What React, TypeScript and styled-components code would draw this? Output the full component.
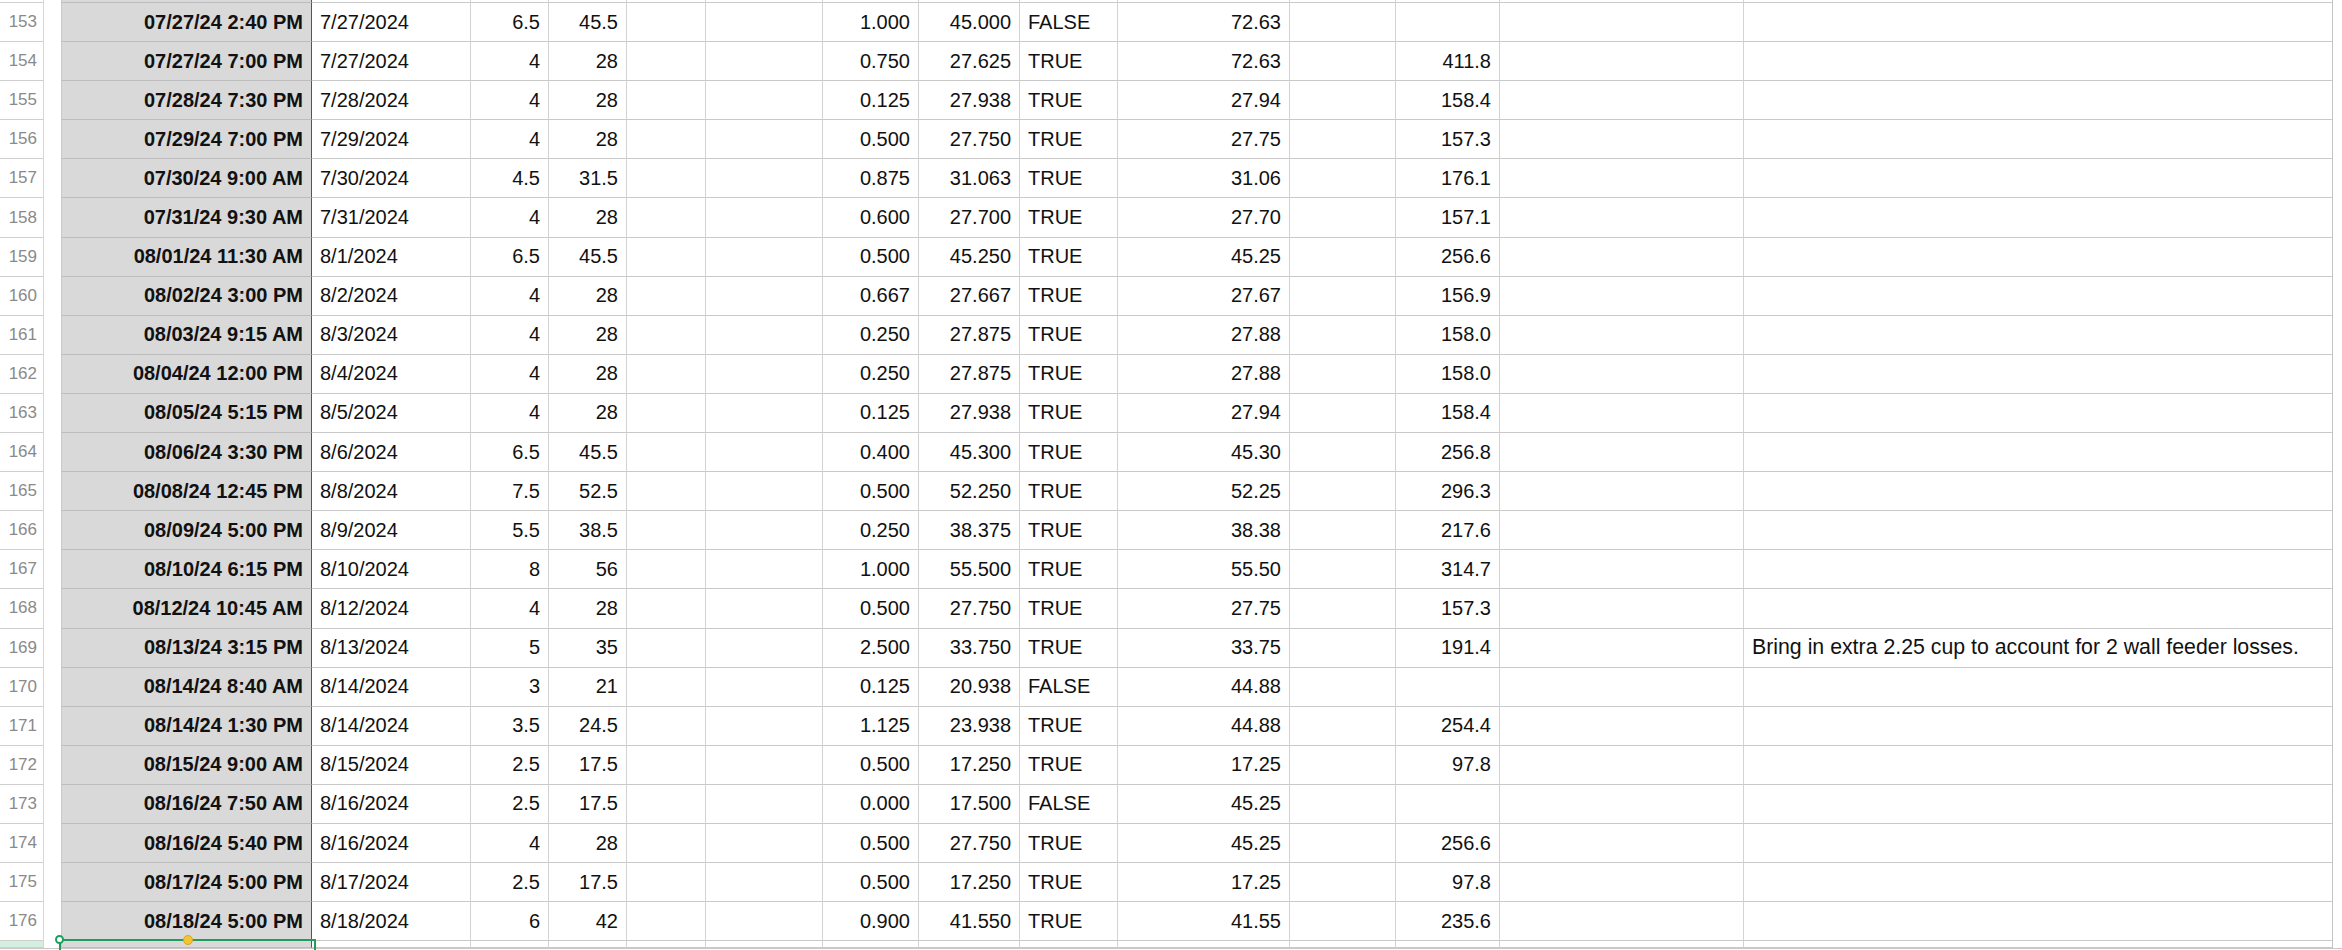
import React from 'react'
import styled, { createGlobalStyle, css } from 'styled-components'

type Row = {
  n: number
  stamp: string
  date: string
  qty: string
  cups: string
  ratio: string
  net: string
  ok: string
  carry: string
  total: string
  note?: string
}

const rows: Row[] = [
  { n: 153, stamp: '07/27/24 2:40 PM', date: '7/27/2024', qty: '6.5', cups: '45.5', ratio: '1.000', net: '45.000', ok: 'FALSE', carry: '72.63', total: '' },
  { n: 154, stamp: '07/27/24 7:00 PM', date: '7/27/2024', qty: '4', cups: '28', ratio: '0.750', net: '27.625', ok: 'TRUE', carry: '72.63', total: '411.8' },
  { n: 155, stamp: '07/28/24 7:30 PM', date: '7/28/2024', qty: '4', cups: '28', ratio: '0.125', net: '27.938', ok: 'TRUE', carry: '27.94', total: '158.4' },
  { n: 156, stamp: '07/29/24 7:00 PM', date: '7/29/2024', qty: '4', cups: '28', ratio: '0.500', net: '27.750', ok: 'TRUE', carry: '27.75', total: '157.3' },
  { n: 157, stamp: '07/30/24 9:00 AM', date: '7/30/2024', qty: '4.5', cups: '31.5', ratio: '0.875', net: '31.063', ok: 'TRUE', carry: '31.06', total: '176.1' },
  { n: 158, stamp: '07/31/24 9:30 AM', date: '7/31/2024', qty: '4', cups: '28', ratio: '0.600', net: '27.700', ok: 'TRUE', carry: '27.70', total: '157.1' },
  { n: 159, stamp: '08/01/24 11:30 AM', date: '8/1/2024', qty: '6.5', cups: '45.5', ratio: '0.500', net: '45.250', ok: 'TRUE', carry: '45.25', total: '256.6' },
  { n: 160, stamp: '08/02/24 3:00 PM', date: '8/2/2024', qty: '4', cups: '28', ratio: '0.667', net: '27.667', ok: 'TRUE', carry: '27.67', total: '156.9' },
  { n: 161, stamp: '08/03/24 9:15 AM', date: '8/3/2024', qty: '4', cups: '28', ratio: '0.250', net: '27.875', ok: 'TRUE', carry: '27.88', total: '158.0' },
  { n: 162, stamp: '08/04/24 12:00 PM', date: '8/4/2024', qty: '4', cups: '28', ratio: '0.250', net: '27.875', ok: 'TRUE', carry: '27.88', total: '158.0' },
  { n: 163, stamp: '08/05/24 5:15 PM', date: '8/5/2024', qty: '4', cups: '28', ratio: '0.125', net: '27.938', ok: 'TRUE', carry: '27.94', total: '158.4' },
  { n: 164, stamp: '08/06/24 3:30 PM', date: '8/6/2024', qty: '6.5', cups: '45.5', ratio: '0.400', net: '45.300', ok: 'TRUE', carry: '45.30', total: '256.8' },
  { n: 165, stamp: '08/08/24 12:45 PM', date: '8/8/2024', qty: '7.5', cups: '52.5', ratio: '0.500', net: '52.250', ok: 'TRUE', carry: '52.25', total: '296.3' },
  { n: 166, stamp: '08/09/24 5:00 PM', date: '8/9/2024', qty: '5.5', cups: '38.5', ratio: '0.250', net: '38.375', ok: 'TRUE', carry: '38.38', total: '217.6' },
  { n: 167, stamp: '08/10/24 6:15 PM', date: '8/10/2024', qty: '8', cups: '56', ratio: '1.000', net: '55.500', ok: 'TRUE', carry: '55.50', total: '314.7' },
  { n: 168, stamp: '08/12/24 10:45 AM', date: '8/12/2024', qty: '4', cups: '28', ratio: '0.500', net: '27.750', ok: 'TRUE', carry: '27.75', total: '157.3' },
  {
    n: 169, stamp: '08/13/24 3:15 PM', date: '8/13/2024', qty: '5', cups: '35', ratio: '2.500', net: '33.750', ok: 'TRUE', carry: '33.75', total: '191.4',
    note: 'Bring in extra 2.25 cup to account for 2 wall feeder losses.',
  },
  { n: 170, stamp: '08/14/24 8:40 AM', date: '8/14/2024', qty: '3', cups: '21', ratio: '0.125', net: '20.938', ok: 'FALSE', carry: '44.88', total: '' },
  { n: 171, stamp: '08/14/24 1:30 PM', date: '8/14/2024', qty: '3.5', cups: '24.5', ratio: '1.125', net: '23.938', ok: 'TRUE', carry: '44.88', total: '254.4' },
  { n: 172, stamp: '08/15/24 9:00 AM', date: '8/15/2024', qty: '2.5', cups: '17.5', ratio: '0.500', net: '17.250', ok: 'TRUE', carry: '17.25', total: '97.8' },
  { n: 173, stamp: '08/16/24 7:50 AM', date: '8/16/2024', qty: '2.5', cups: '17.5', ratio: '0.000', net: '17.500', ok: 'FALSE', carry: '45.25', total: '' },
  { n: 174, stamp: '08/16/24 5:40 PM', date: '8/16/2024', qty: '4', cups: '28', ratio: '0.500', net: '27.750', ok: 'TRUE', carry: '45.25', total: '256.6' },
  { n: 175, stamp: '08/17/24 5:00 PM', date: '8/17/2024', qty: '2.5', cups: '17.5', ratio: '0.500', net: '17.250', ok: 'TRUE', carry: '17.25', total: '97.8' },
  { n: 176, stamp: '08/18/24 5:00 PM', date: '8/18/2024', qty: '6', cups: '42', ratio: '0.900', net: '41.550', ok: 'TRUE', carry: '41.55', total: '235.6' },
]

const GREEN = '#1f9d5c'

const GlobalStyle = createGlobalStyle`
  html, body {
    margin: 0;
    padding: 0;
    background: #fff;
    overflow: hidden;
  }
  body {
    font-family: 'Liberation Sans', Arial, Helvetica, sans-serif;
    color: #111;
  }
`

const Sheet = styled.div`
  width: 2342px;
  height: 950px;
  overflow: hidden;
`

// row header | gutter | frozen key | date | 12 data columns
const SheetRow = styled.div<{ $h: string; $open?: boolean }>`
  display: grid;
  grid-template-columns: 44px 17px 251px 159px 78px 78px 79px 117px 96px 101px 98px 172px 106px 104px 244px 589px;
  height: ${({ $h }) => $h};
  overflow: ${({ $open }) => ($open ? 'visible' : 'hidden')};
`

const RowHeader = styled.div<{ $active?: boolean }>`
  box-sizing: border-box;
  display: flex;
  align-items: center;
  justify-content: flex-end;
  padding-right: 6px;
  font-size: 17px;
  color: #8a8a8a;
  border-right: 1px solid #d6d6d6;
  border-bottom: 1px solid #cfcfcf;
  background: ${({ $active }) => ($active ? '#d3efdf' : '#fff')};
`

const Gutter = styled.div`
  background: #fff;
`

const KeyCell = styled.div`
  position: relative;
  box-sizing: border-box;
  display: flex;
  align-items: center;
  justify-content: flex-end;
  padding: 0 8px;
  font-size: 20px;
  font-weight: 700;
  color: #111;
  white-space: nowrap;
  background: #d9d9d9;
  border-left: 1px solid #c9c9c9;
  border-right: 1px solid #555;
  border-bottom: 1px solid #bdbdbd;
`

const Cell = styled.div<{ $align?: 'left' | 'right'; $last?: boolean }>`
  box-sizing: border-box;
  display: flex;
  align-items: center;
  justify-content: ${({ $align }) => ($align === 'left' ? 'flex-start' : 'flex-end')};
  padding: 0 8px;
  font-size: 20px;
  white-space: nowrap;
  border-right: 1px solid ${({ $last }) => ($last ? '#c4c4c4' : '#d3d3d3')};
  border-bottom: 1px solid #c9c9c9;
`

const NoteCell = styled(Cell)`
  font-size: 21.3px;
`

const Selection = styled.div`
  position: absolute;
  left: -3px;
  right: -5px;
  top: -2px;
  bottom: -10px;
  border: 2px solid ${GREEN};
  pointer-events: none;
`

const Handle = styled.span<{ $kind: 'anchor' | 'fill' }>`
  position: absolute;
  top: -6px;
  width: 9px;
  height: 9px;
  border-radius: 50%;
  box-sizing: border-box;
  ${({ $kind }) =>
    $kind === 'anchor'
      ? css`
          left: -6px;
          background: #fff;
          border: 2px solid ${GREEN};
        `
      : css`
          left: 122px;
          background: #f5c431;
          border: 1px solid #d9a420;
          width: 10px;
          height: 10px;
        `}
`

const BottomEdge = styled.div`
  height: 2px;
  border-top: 1px solid #c8c8c8;
  background: #fff;
`

const emptyCols = 12

const DataRow: React.FC<{ row: Row }> = ({ row }) => (
  <SheetRow $h="39.1px">
    <RowHeader>{row.n}</RowHeader>
    <Gutter />
    <KeyCell>{row.stamp}</KeyCell>
    <Cell $align="left">{row.date}</Cell>
    <Cell>{row.qty}</Cell>
    <Cell>{row.cups}</Cell>
    <Cell />
    <Cell />
    <Cell>{row.ratio}</Cell>
    <Cell>{row.net}</Cell>
    <Cell $align="left">{row.ok}</Cell>
    <Cell>{row.carry}</Cell>
    <Cell />
    <Cell>{row.total}</Cell>
    <Cell />
    <NoteCell $align="left" $last>
      {row.note}
    </NoteCell>
  </SheetRow>
)

// a sliver of the row scrolled past at the top / bottom of the view
const EdgeRow: React.FC<{ h: string; active?: boolean }> = ({ h, active }) => (
  <SheetRow $h={h} $open={active}>
    <RowHeader $active={active} />
    <Gutter />
    <KeyCell>
      {active && (
        <Selection>
          <Handle $kind="anchor" />
          <Handle $kind="fill" />
        </Selection>
      )}
    </KeyCell>
    {Array.from({ length: emptyCols + 1 }).map((_, i) => (
      <Cell key={i} $last={i === emptyCols} />
    ))}
  </SheetRow>
)

export default function App() {
  return (
    <>
      <GlobalStyle />
      <Sheet>
        <EdgeRow h="3px" />
        {rows.map((r) => (
          <DataRow key={r.n} row={r} />
        ))}
        <EdgeRow h="7px" active />
        <BottomEdge />
      </Sheet>
    </>
  )
}
